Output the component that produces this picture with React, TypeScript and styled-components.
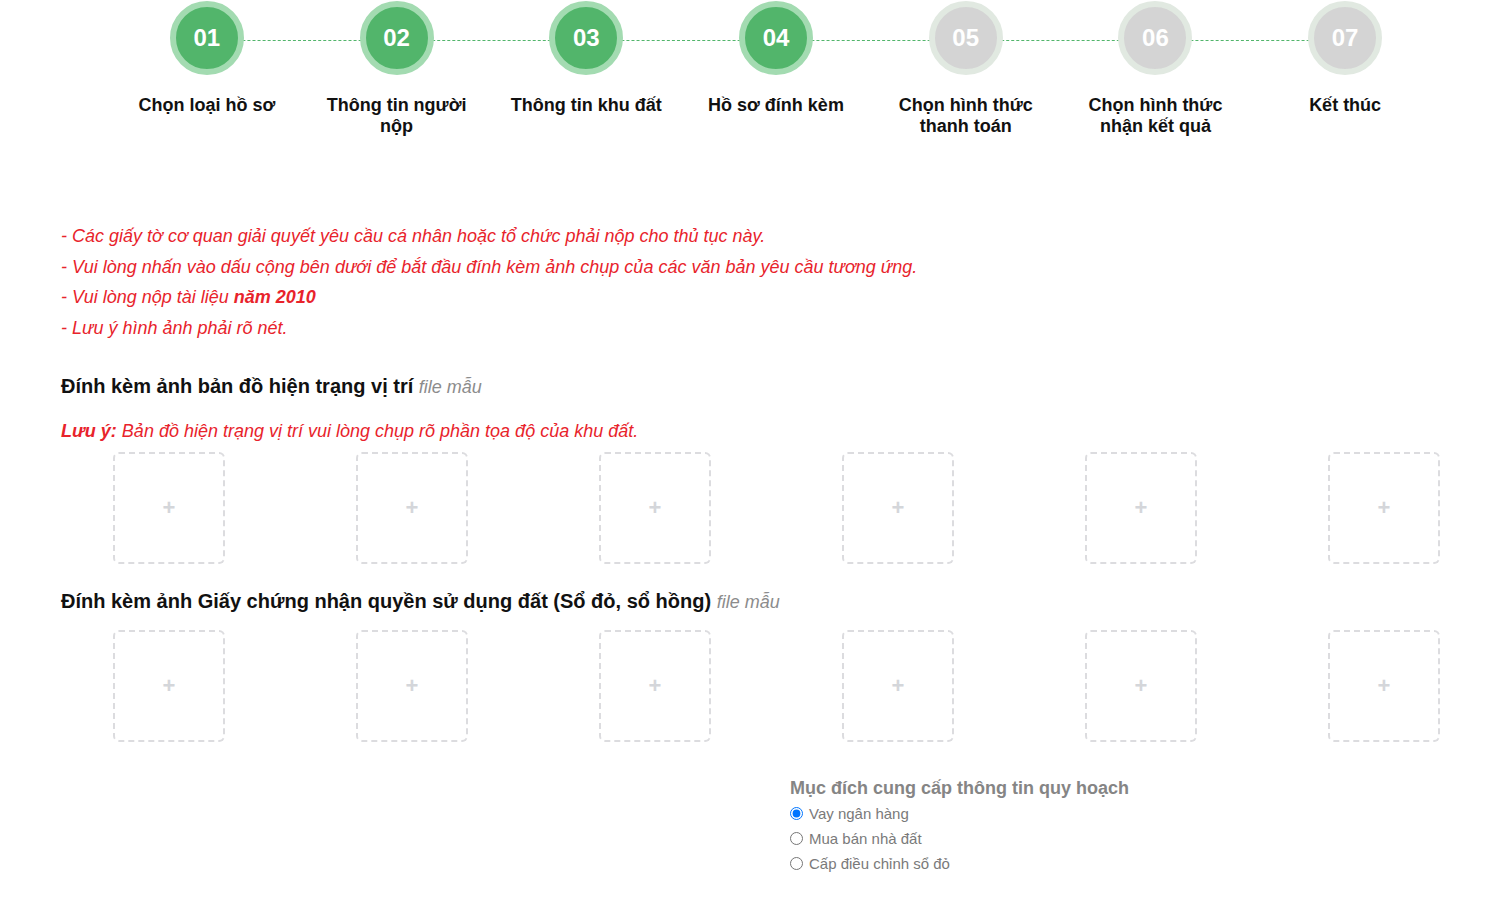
import styled, {createGlobalStyle} from "styled-components";

const GlobalStyle = createGlobalStyle`
    body {
        margin: 0;
        background: #fff;
        font-family: "Liberation Sans", Arial, sans-serif;
    }
`

const steps = [
    {no: "01", label: "Chọn loại hồ sơ", done: true},
    {no: "02", label: "Thông tin người nộp", done: true},
    {no: "03", label: "Thông tin khu đất", done: true},
    {no: "04", label: "Hồ sơ đính kèm", done: true},
    {no: "05", label: "Chọn hình thức thanh toán", done: false},
    {no: "06", label: "Chọn hình thức nhận kết quả", done: false},
    {no: "07", label: "Kết thúc", done: false},
];

const notes = [
    <>- Các giấy tờ cơ quan giải quyết yêu cầu cá nhân hoặc tổ chức phải nộp cho thủ tục này.</>,
    <>- Vui lòng nhấn vào dấu cộng bên dưới để bắt đầu đính kèm ảnh chụp của các văn bản yêu cầu tương ứng.</>,
    <>- Vui lòng nộp tài liệu <b>năm 2010</b></>,
    <>- Lưu ý hình ảnh phải rõ nét.</>,
];

const purposes = ["Vay ngân hàng", "Mua bán nhà đất", "Cấp điều chỉnh sổ đỏ"];

const UploadRow = ({gap}: { gap: number }) => (
    <Boxes gap={gap}>
        {Array.from({length: 6}).map((_, i) => (
            <UploadBox key={i} type="button">+</UploadBox>
        ))}
    </Boxes>
);

export default function App() {
    return (
        <Page>
            <GlobalStyle/>
            <Stepper>
                {steps.map((s, i) => (
                    <Step key={s.no} first={i === 0}>
                        <Circle done={s.done}>{s.no}</Circle>
                        <StepLabel>{s.label}</StepLabel>
                    </Step>
                ))}
            </Stepper>

            <Content>
                <Notes>
                    {notes.map((n, i) => <p key={i}>{n}</p>)}
                </Notes>

                <SectionTitle>
                    Đính kèm ảnh bản đồ hiện trạng vị trí <Sample>file mẫu</Sample>
                </SectionTitle>
                <Warning><b>Lưu ý:</b> Bản đồ hiện trạng vị trí vui lòng chụp rõ phần tọa độ của khu đất.</Warning>
                <UploadRow gap={9}/>

                <SectionTitle second>
                    Đính kèm ảnh Giấy chứng nhận quyền sử dụng đất (Sổ đỏ, sổ hồng) <Sample>file mẫu</Sample>
                </SectionTitle>
                <UploadRow gap={15}/>

                <Purpose>
                    <PurposeTitle>Mục đích cung cấp thông tin quy hoạch</PurposeTitle>
                    {purposes.map((p, i) => (
                        <RadioRow key={p}>
                            <input type="radio" name="purpose" defaultChecked={i === 0}/>
                            {p}
                        </RadioRow>
                    ))}
                </Purpose>
            </Content>
        </Page>
    );
}

const Page = styled.div`
    width: 1504px;
    min-height: 897px;
    padding-top: 1px;
    box-sizing: border-box;
`

const Stepper = styled.div`
    display: grid;
    grid-template-columns: repeat(7, 1fr);
    margin: 0 64px 0 112px;
`

const Step = styled.div<{ first?: boolean }>`
    position: relative;
    display: flex;
    flex-direction: column;
    align-items: center;

    &::before {
        content: "";
        display: ${p => p.first ? "none" : "block"};
        position: absolute;
        top: 39px;
        left: -50%;
        right: 50%;
        border-top: 1px dashed #52b56b;
    }
`

const Circle = styled.div<{ done: boolean }>`
    position: relative;
    z-index: 1;
    width: 62px;
    height: 62px;
    border-radius: 50%;
    border: 6px solid ${p => p.done ? "#a3dbb1" : "#e1e9e1"};
    background: ${p => p.done ? "#52b56b" : "#d4d4d4"};
    color: #fff;
    font-size: 24px;
    font-weight: 700;
    display: flex;
    align-items: center;
    justify-content: center;
`

const StepLabel = styled.div`
    margin-top: 20px;
    width: 160px;
    text-align: center;
    font-size: 18px;
    font-weight: 700;
    line-height: 21px;
    color: #111;
`

const Content = styled.div`
    padding: 0 64px 0 61px;
`

const Notes = styled.div`
    margin-top: 84px;

    p {
        margin: 0;
        font-size: 18px;
        line-height: 30.5px;
        font-style: italic;
        color: #e8232b;
    }
`

const SectionTitle = styled.h3<{ second?: boolean }>`
    margin: ${p => p.second ? "24px" : "30px"} 0 0;
    font-size: 20px;
    line-height: 26px;
    font-weight: 700;
    color: #111;
`

const Sample = styled.span`
    font-size: 18px;
    font-weight: 400;
    font-style: italic;
    color: #8c8c8c;
`

const Warning = styled.p`
    margin: 19px 0 0;
    font-size: 18px;
    line-height: 24px;
    font-style: italic;
    color: #e8232b;
`

const Boxes = styled.div<{ gap: number }>`
    display: flex;
    justify-content: space-between;
    margin: ${p => p.gap}px 0 0 52px;
`

const UploadBox = styled.button`
    width: 112px;
    height: 112px;
    box-sizing: border-box;
    border: 2px dashed #dcdcdf;
    border-radius: 6px;
    background: #fff;
    color: #d4d6da;
    font-family: "Liberation Sans", Arial, sans-serif;
    font-size: 22px;
    font-weight: 700;
    padding: 0;
    cursor: pointer;
`

const Purpose = styled.div`
    margin: 34px 0 0 729px;
    display: flex;
    flex-direction: column;
`

const PurposeTitle = styled.div`
    font-size: 18px;
    line-height: 25px;
    font-weight: 700;
    color: #858585;
`

const RadioRow = styled.label`
    display: flex;
    align-items: center;
    height: 25px;
    font-size: 15px;
    color: #7a7a7a;

    input {
        margin: 0 6px 0 0;
        width: 13px;
        height: 13px;
    }
`
